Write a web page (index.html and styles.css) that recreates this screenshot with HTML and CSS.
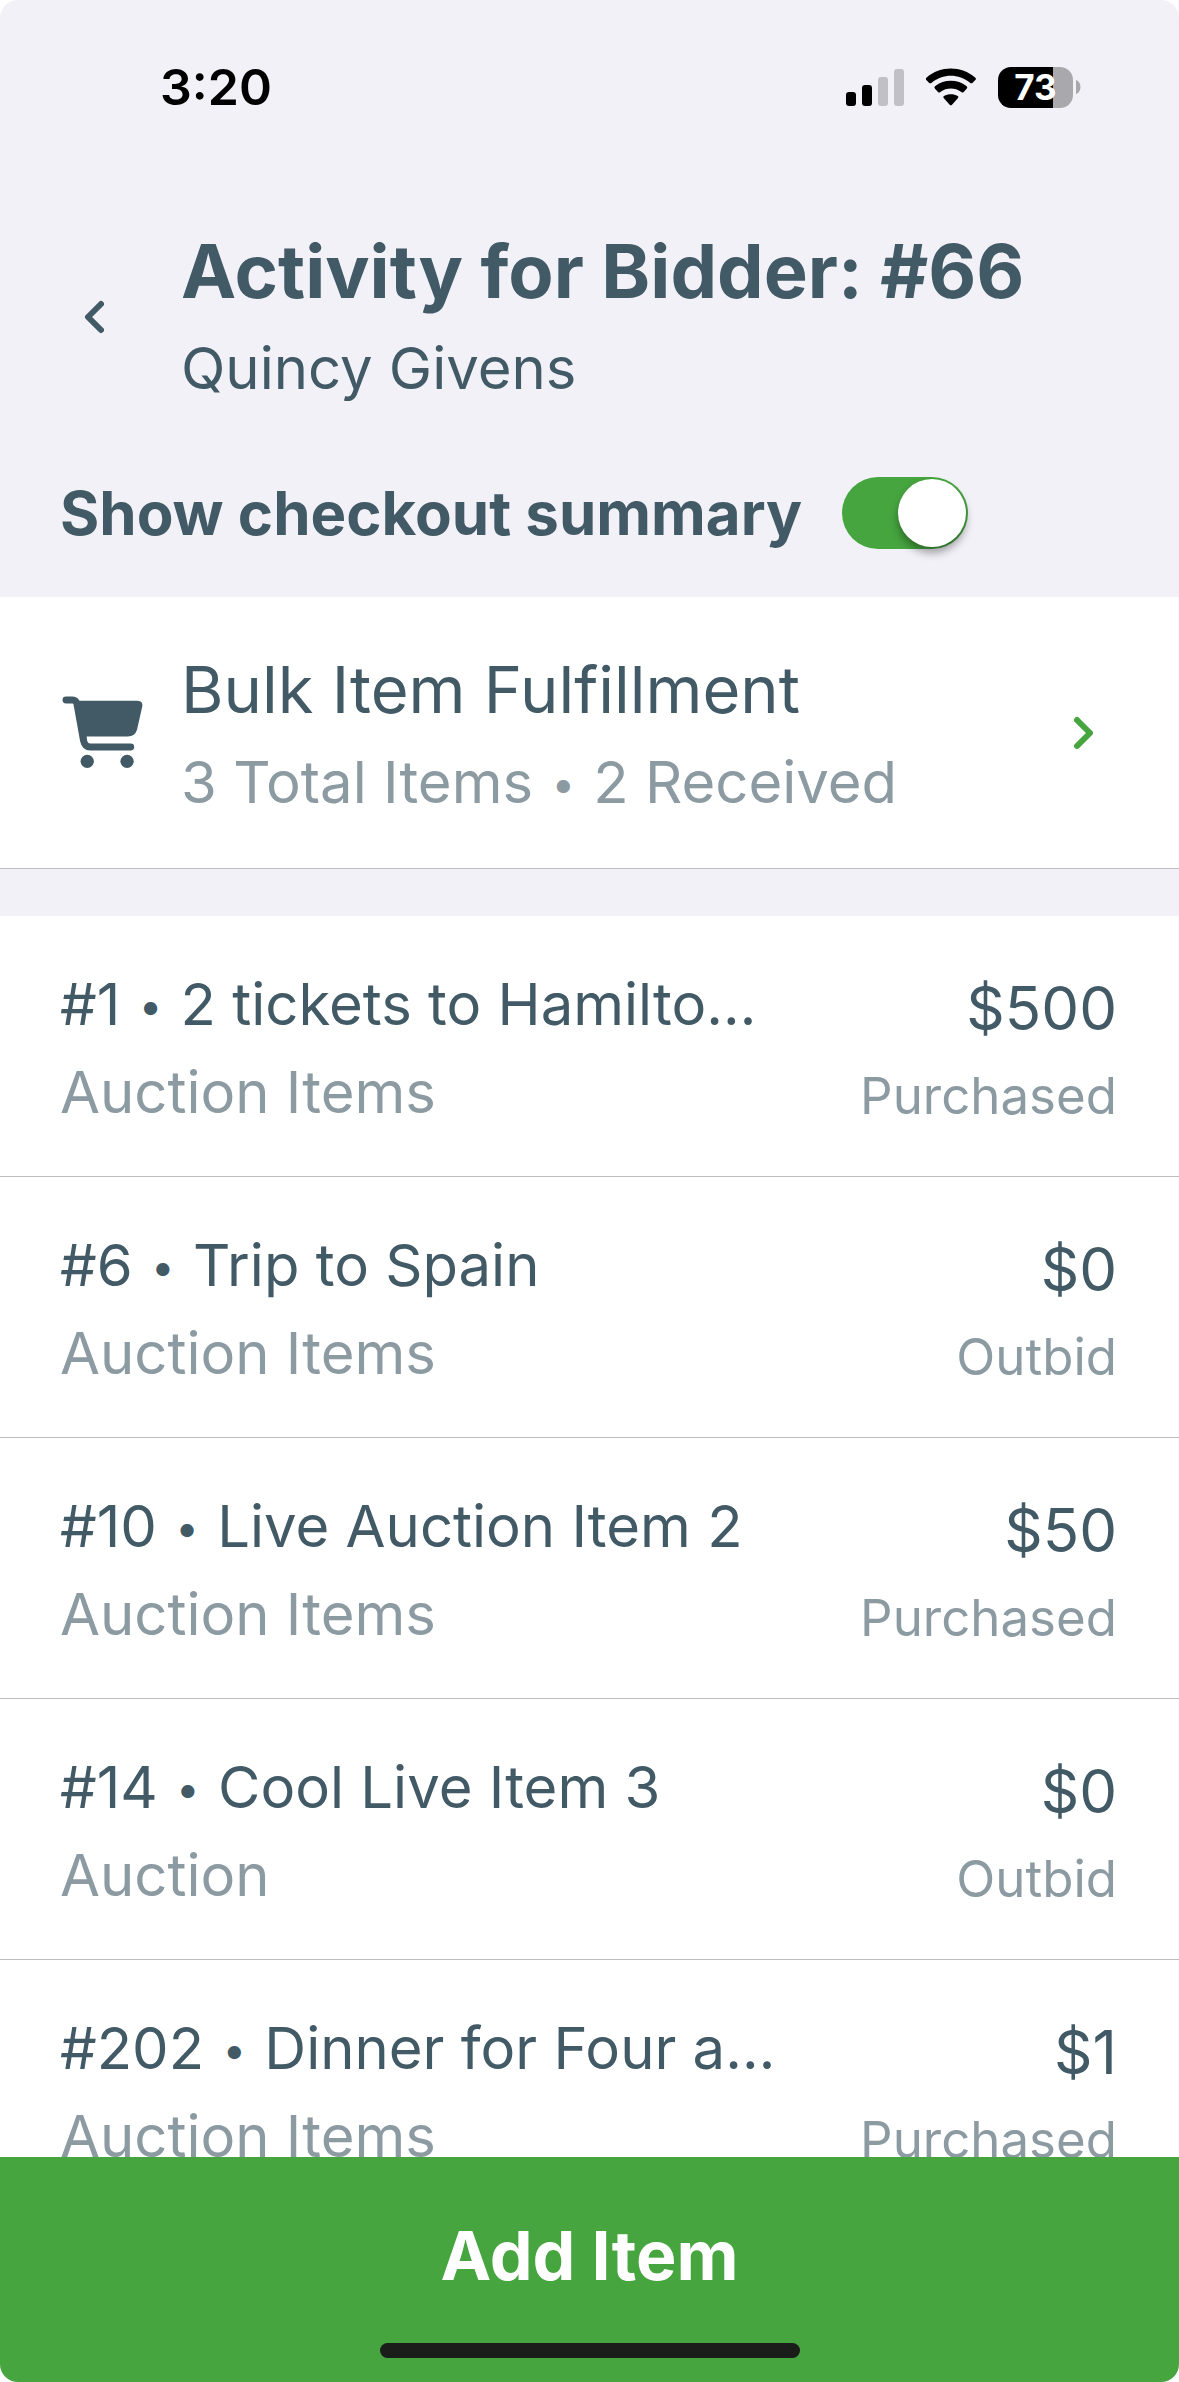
FILE: index.html
```html
<!DOCTYPE html>
<html lang="en">

<head>
    <meta charset="UTF-8">
    <meta name="viewport" content="width=device-width, initial-scale=1">
    <title>Activity for Bidder</title>
    <link rel="stylesheet" href="styles.css">
</head>

<body>
    <div class="app">
        <div class="statusbar">
            <span class="time">3:20</span>
            <div class="status-icons">
                <svg class="signal" viewBox="0 0 58 38" width="58" height="38">
                    <rect x="0" y="24" width="10" height="14" rx="3" />
                    <rect x="16" y="17" width="10" height="21" rx="3" />
                    <rect class="off" x="32" y="9" width="10" height="29" rx="3" />
                    <rect class="off" x="48" y="1" width="10" height="37" rx="3" />
                </svg>
                <svg class="wifi" viewBox="320 86 150 112" width="50" height="38">
                    <path d="M321 121Q317 118 321 114C363 77 426 77 468 114Q472 118 468 121L460 129Q456 132 452 129C418 101 371 101 337 129Q333 132 329 129Z" />
                    <path d="M347 147Q343 143 347 140C375 118 414 118 442 140Q446 143 442 147L433 157Q430 160 426 157C407 143 382 143 363 157Q359 160 356 157Z" />
                    <path d="M373 175Q370 171 374 169C386 162 403 162 415 169Q419 171 416 175L398 195Q394 199 391 195Z" />
                </svg>
                <div class="battery">
                    <span class="battery-level">73</span>
                    <svg class="battery-tip" viewBox="0 0 5 14" width="5" height="14">
                        <path d="M0 0C6 2 6 12 0 14Z" />
                    </svg>
                </div>
            </div>
        </div>

        <header>
            <button class="back" aria-label="Back">
                <svg viewBox="0 0 20 34" width="20" height="34">
                    <path d="M17 4L4 17L17 30" />
                </svg>
            </button>
            <div>
                <h1>Activity for Bidder: #66</h1>
                <p class="bidder">Quincy Givens</p>
            </div>
        </header>

        <div class="summary">
            <label for="summary">Show checkout summary</label>
            <input type="checkbox" role="switch" id="summary" class="switch" checked>
        </div>

        <a href="#" class="bulk">
            <svg class="cart" viewBox="34 76 244 220" width="81" height="73">
                <path class="line" d="M46 88H66Q76 88 79 100L99 211Q103 230 119 230H241" />
                <path d="M76 90H262Q278 91 276 107L260 178Q254 198 232 198H108V216H92Z" />
                <circle cx="110" cy="273" r="20" />
                <circle cx="230" cy="273" r="20" />
            </svg>
            <div class="bulk-text">
                <h2>Bulk Item Fulfillment</h2>
                <p class="sub">3 Total Items <span class="dot">•</span> 2 Received</p>
            </div>
            <svg class="chevron" viewBox="0 0 20 34" width="20" height="34">
                <path d="M4 4L17 17L4 30" />
            </svg>
        </a>

        <main>
            <article class="item">
                <div class="info">
                    <h3>#1 <span class="dot">•</span> 2 tickets to Hamilto…</h3>
                    <p class="sub">Auction Items</p>
                </div>
                <div class="amount">
                    <p class="price">$500</p>
                    <p class="state">Purchased</p>
                </div>
            </article>
            <article class="item">
                <div class="info">
                    <h3>#6 <span class="dot">•</span> Trip to Spain</h3>
                    <p class="sub">Auction Items</p>
                </div>
                <div class="amount">
                    <p class="price">$0</p>
                    <p class="state">Outbid</p>
                </div>
            </article>
            <article class="item">
                <div class="info">
                    <h3>#10 <span class="dot">•</span> Live Auction Item 2</h3>
                    <p class="sub">Auction Items</p>
                </div>
                <div class="amount">
                    <p class="price">$50</p>
                    <p class="state">Purchased</p>
                </div>
            </article>
            <article class="item">
                <div class="info">
                    <h3>#14 <span class="dot">•</span> Cool Live Item 3</h3>
                    <p class="sub">Auction</p>
                </div>
                <div class="amount">
                    <p class="price">$0</p>
                    <p class="state">Outbid</p>
                </div>
            </article>
            <article class="item">
                <div class="info">
                    <h3>#202 <span class="dot">•</span> Dinner for Four a…</h3>
                    <p class="sub">Auction Items</p>
                </div>
                <div class="amount">
                    <p class="price">$1</p>
                    <p class="state">Purchased</p>
                </div>
            </article>
        </main>

        <footer>
            <button class="add">Add Item</button>
            <div class="home"></div>
        </footer>
    </div>
</body>

</html>
```

FILE: styles.css
```css
* {
    box-sizing: border-box;
}

body {
    margin: 0;
    background-color: white;
    font-family: Inter, "Liberation Sans", sans-serif;
    color: #425a66;
}

h1,
h2,
h3,
p {
    margin: 0;
    white-space: nowrap;
}

button {
    border: none;
    padding: 0;
    background: none;
    font-family: inherit;
    cursor: pointer;
}

.app {
    display: flex;
    flex-direction: column;
    height: 100vh;
    overflow: hidden;
    background-color: #f2f1f8;
    border-radius: 18px;
}

/* status bar */
.statusbar {
    display: flex;
    justify-content: space-between;
    align-items: center;
    flex-shrink: 0;
    padding: 57px 98px 0 160px;
    color: black;
}

.time {
    font-size: 50px;
    font-weight: 600;
    line-height: 60px;
}

.status-icons {
    display: flex;
    align-items: center;
    gap: 22px;
}

.signal .off {
    fill: #c1c0c6;
}

.battery {
    display: flex;
    align-items: center;
    gap: 3px;
}

.battery-level {
    width: 75px;
    border-radius: 13px;
    background: linear-gradient(to right, black 55px, #a9a8ad 55px);
    color: white;
    font-size: 35px;
    font-weight: 700;
    line-height: 41px;
    text-align: center;
}

.battery-tip {
    fill: #a9a8ad;
}

/* header */
header {
    display: flex;
    align-items: center;
    flex-shrink: 0;
    padding: 104px 60px 0;
}

.back {
    width: 121px;
    height: 80px;
    padding-left: 24px;
    text-align: left;
}

.back svg,
.chevron {
    fill: none;
    stroke: #425a66;
    stroke-width: 6;
    stroke-linecap: round;
    stroke-linejoin: round;
}

h1 {
    font-size: 74px;
    font-weight: 700;
    line-height: 100px;
}

.bidder {
    font-size: 58px;
    line-height: 94px;
}

.summary {
    display: flex;
    align-items: center;
    flex-shrink: 0;
    gap: 40px;
    padding: 62px 60px 48px;
    font-size: 60px;
    font-weight: 700;
    line-height: 72px;
}

.switch {
    appearance: none;
    width: 126px;
    height: 72px;
    margin: 0;
    padding: 2px;
    border-radius: 36px;
    background-color: #d5d5da;
}

.switch::before {
    content: "";
    display: block;
    width: 68px;
    height: 68px;
    border-radius: 50%;
    background-color: white;
    box-shadow: 0 6px 8px rgba(0, 0, 0, 0.35);
}

.switch:checked {
    background-color: #46a53f;
}

.switch:checked::before {
    margin-left: auto;
}

/* bulk row */
.bulk {
    display: flex;
    align-items: center;
    flex-shrink: 0;
    margin-bottom: 47px;
    padding: 0 86px 0 62px;
    border-bottom: 1px solid #bebdc4;
    background-color: white;
    color: inherit;
    text-decoration: none;
}

.cart {
    fill: #425a66;
}

.cart .line {
    fill: none;
    stroke: #425a66;
    stroke-width: 21;
    stroke-linecap: round;
    stroke-linejoin: round;
}

.bulk-text {
    flex: 1;
    padding: 48px 0 39px 38px;
}

h2 {
    font-size: 65px;
    font-weight: 400;
    line-height: 90px;
}

.sub {
    color: #8c9aa2;
    font-size: 58px;
    line-height: 88px;
}

.bulk .sub {
    line-height: 94px;
}

/* small separator, must not stretch the line it sits in */
.dot {
    margin: 0 2px;
    font-size: 42px;
    line-height: 0;
    vertical-align: 4px;
}

.chevron {
    stroke: #46a53f;
}

/* items */
main {
    flex: 1;
    min-height: 0;
    overflow: hidden;
    background-color: white;
}

.item {
    display: flex;
    justify-content: space-between;
    padding: 44px 62px 40px 60px;
    border-bottom: 1px solid #bebec0;
}

h3 {
    font-size: 58px;
    font-weight: 400;
    line-height: 88px;
}

.amount {
    padding-top: 6px;
    text-align: right;
}

.price {
    font-size: 60px;
    line-height: 84px;
}

.state {
    color: #8c9aa2;
    font-size: 51px;
    line-height: 92px;
    margin-bottom: -6px;
}

/* bottom button */
footer {
    display: flex;
    flex-direction: column;
    align-items: center;
    flex-shrink: 0;
    padding-bottom: 24px;
    background-color: #46a53f;
}

.add {
    width: 100%;
    padding: 48px 0 38px;
    color: white;
    font-size: 68px;
    font-weight: 700;
    line-height: 100px;
}

.home {
    width: 420px;
    height: 15px;
    border-radius: 8px;
    background-color: #1b1d1b;
}
```
